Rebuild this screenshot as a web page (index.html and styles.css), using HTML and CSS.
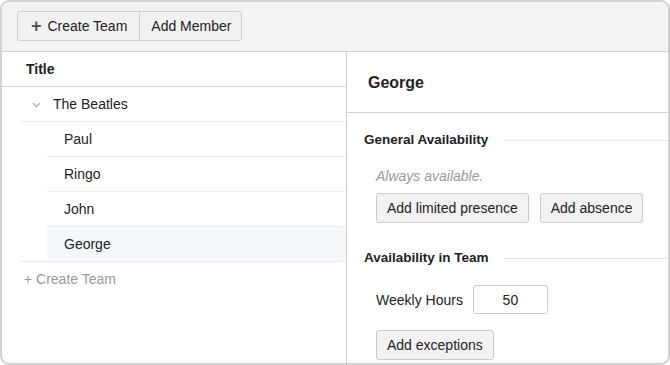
FILE: index.html
```html
<!DOCTYPE html>
<html lang="en">
<head>
    <meta charset="UTF-8">
    <title>Teams</title>
    <link rel="stylesheet" href="styles.css">
</head>
<body>
    <div class="app">
        <div class="toolbar">
            <div class="btn-group">
                <button class="tb-btn"><span class="plus">+</span> Create Team</button>
                <button class="tb-btn">Add Member</button>
            </div>
        </div>

        <div class="main">
            <div class="tree">
                <div class="tree-head">Title</div>
                <div class="row team">
                    <svg class="chevron" width="9" height="6" viewBox="0 0 9 6"><path d="M1 1 L4.5 4.5 L8 1" fill="none" stroke="#b5b5b5" stroke-width="1.4"/></svg>
                    <span>The Beatles</span>
                </div>
                <div class="row member">Paul</div>
                <div class="row member">Ringo</div>
                <div class="row member">John</div>
                <div class="row member selected">George</div>
                <div class="row-end"></div>
                <div class="add-team">+ Create Team</div>
            </div>

            <div class="detail">
                <div class="detail-head">George</div>
                <div class="section">
                    <div class="section-title"><span>General Availability</span></div>
                    <div class="muted">Always available.</div>
                    <div class="actions">
                        <button class="btn">Add limited presence</button>
                        <button class="btn">Add absence</button>
                    </div>
                </div>
                <div class="section">
                    <div class="section-title"><span>Availability in Team</span></div>
                    <div class="field">
                        <label>Weekly Hours</label>
                        <input class="hours" type="text" value="50">
                    </div>
                    <div class="actions">
                        <button class="btn">Add exceptions</button>
                    </div>
                </div>
            </div>
        </div>
    </div>
</body>
</html>
```

FILE: styles.css
```css
* {
    margin: 0;
    padding: 0;
    box-sizing: border-box;
}

body {
    font-family: 'Liberation Sans', Arial, sans-serif;
    font-size: 14px;
    color: #222;
    background: #fff;
}

.app {
    width: 670px;
    height: 365px;
    border: 2px solid #d2d2d2;
    border-radius: 9px;
    overflow: hidden;
    display: flex;
    flex-direction: column;
}

.toolbar {
    height: 50px;
    flex-shrink: 0;
    background-color: #f3f3f3;
    border-bottom: 1px solid #cfcfcf;
    padding: 9px 0 0 15px;
}

.btn-group {
    display: inline-flex;
    border: 1px solid #cdcdcd;
    border-radius: 3px;
    background-color: #f1f1f1;
    height: 30px;
}

.tb-btn {
    font-family: inherit;
    font-size: 14px;
    color: #222;
    background: none;
    border: none;
    padding: 0 12px 0 13px;
}

.tb-btn + .tb-btn {
    border-left: 1px solid #d0d0d0;
    padding: 0 10px 0 11px;
}

.plus {
    font-weight: bold;
    font-size: 18px;
    line-height: 14px;
    color: #555;
    margin-right: 2px;
    vertical-align: -1px;
}

.main {
    flex: 1;
    display: flex;
    min-height: 0;
}

.tree {
    width: 345px;
    border-right: 1px solid #d0d0d0;
}

.tree-head {
    height: 35px;
    line-height: 34px;
    font-size: 14px;
    font-weight: bold;
    padding-left: 24px;
    border-bottom: 1px solid #d6d6d6;
}

.row {
    height: 35px;
    line-height: 34px;
    border-bottom: 1px solid #ebebeb;
}

.team {
    margin-left: 18px;
    display: flex;
    align-items: center;
}

.chevron {
    margin: 1px 0 0 12px;
}

.team span {
    margin-left: 12px;
}

.member {
    margin-left: 45px;
    padding-left: 17px;
}

.member.selected {
    background-color: #f4f8fd;
    border-bottom: none;
    height: 34px;
}

.row-end {
    margin-left: 18px;
    border-bottom: 1px solid #ebebeb;
}

.add-team {
    color: #999;
    padding: 9px 0 0 22px;
}

.detail {
    flex: 1;
}

.detail-head {
    height: 61px;
    line-height: 61px;
    font-size: 16px;
    font-weight: bold;
    padding-left: 21px;
    border-bottom: 1px solid #d0d0d0;
}

.section {
    padding: 16px 0 0 17px;
}

.section + .section {
    padding-top: 24px;
}

.section-title {
    display: flex;
    align-items: center;
    font-size: 13.5px;
    font-weight: bold;
    height: 20px;
}

.section-title::after {
    content: '';
    flex: 1;
    border-top: 1px solid #e3e3e3;
    margin: 2px 0 0 15px;
}

.muted {
    color: #999;
    font-style: italic;
    line-height: 16px;
    margin: 19px 0 0 12px;
}

.actions {
    display: flex;
    gap: 11px;
    margin: 9px 0 0 12px;
}

.btn {
    font-family: inherit;
    font-size: 14px;
    color: #222;
    background-color: #f2f2f2;
    border: 1px solid #cbcbcb;
    border-radius: 3px;
    height: 30px;
    padding: 0 10px;
}

.field {
    display: flex;
    align-items: center;
    margin: 18px 0 0 12px;
}

.field label {
    margin-right: 10px;
}

.hours {
    width: 75px;
    height: 29px;
    border: 1px solid #cbcbcb;
    border-radius: 3px;
    font-family: inherit;
    font-size: 14px;
    text-align: center;
    color: #222;
}

.field + .actions {
    margin-top: 16px;
}
```
